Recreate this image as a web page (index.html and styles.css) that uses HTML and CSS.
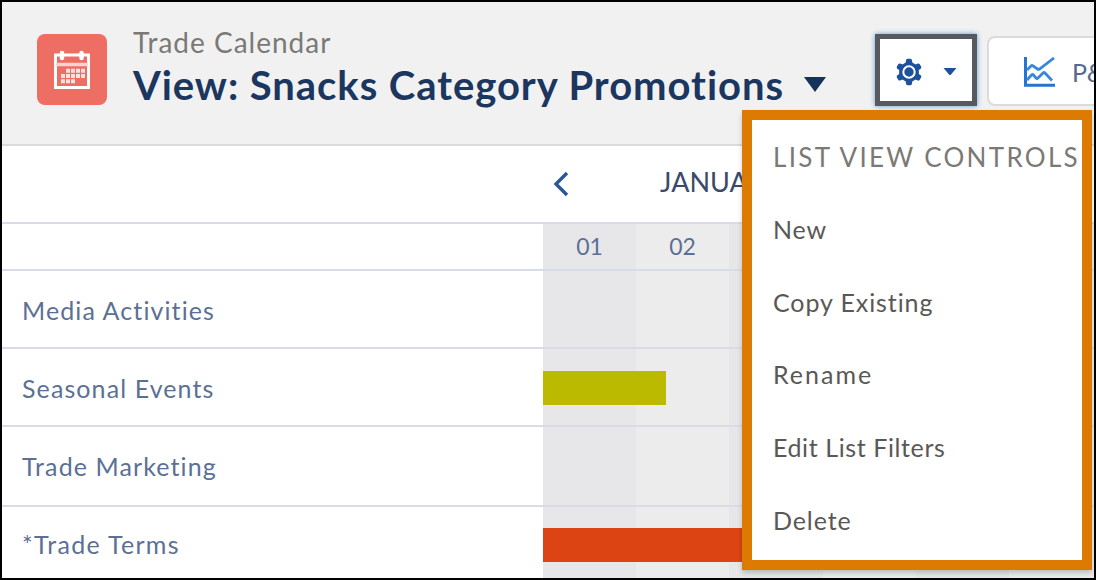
FILE: index.html
```html
<!DOCTYPE html>
<html lang="en">
<head>
    <meta charset="UTF-8">
    <meta name="viewport" content="width=device-width, initial-scale=1.0">
    <title>Trade Calendar</title>
    <link rel="stylesheet" href="styles.css">
</head>
<body>

    <div class="page">
        <header class="header">
            <div class="calendar-icon">
                <svg width="38" height="40" viewBox="0 0 38 40">
                    <path d="M2.500 5h33v32.500h-33z" fill="none" stroke="#fff" stroke-width="3"/>
                    <path d="M3 14.500h32" stroke="#fbd3d0" stroke-width="3.500"/>
                    <path d="M9 3v5M28.500 3v5" stroke="#fff" stroke-width="4.500" stroke-linecap="round"/>
                    <path d="M13 20.700h19M8 26h24M8 31.300h14" stroke="#fde3e0" stroke-width="4" stroke-dasharray="4 1"/>
                </svg>
            </div>
            <div class="heading">
                <p class="subtitle">Trade Calendar</p>
                <div class="title-line">
                    <h1 class="title">View: Snacks Category Promotions</h1>
                    <svg width="24" height="16" viewBox="0 0 24 16"><path d="M1 0h22L12 15z" fill="#16325c"/></svg>
                </div>
            </div>
            <button class="settings-button">
                <svg width="28" height="28" viewBox="0 0 28 28">
                    <g fill="#1d519b">
                        <circle cx="14" cy="14" r="10"/>
                        <path id="tooth" d="M10.500 6l.6-4q.4-1.200 1.600-1.200h2.600q1.200 0 1.600 1.200l.6 4z"/>
                        <use href="#tooth" transform="rotate(60 14 14)"/>
                        <use href="#tooth" transform="rotate(120 14 14)"/>
                        <use href="#tooth" transform="rotate(180 14 14)"/>
                        <use href="#tooth" transform="rotate(240 14 14)"/>
                        <use href="#tooth" transform="rotate(300 14 14)"/>
                    </g>
                    <circle cx="14" cy="14" r="5.700" fill="#1d519b" stroke="#fff" stroke-width="2"/>
                </svg>
                <svg width="14" height="9" viewBox="0 0 14 9"><path d="M.5 1h13L8 7.500q-1 1-2 0z" fill="#1d519b"/></svg>
            </button>
            <button class="pl-button">
                <svg width="32" height="30" viewBox="0 0 32 30" fill="none" stroke="#3a87da">
                    <path d="M1.500 0v28.300H31" stroke="#2474d0" stroke-width="3"/>
                    <path d="M3 13l4-4q1-1 2 0l4.500 3q1 .7 2 0L30 1" stroke-width="2.800"/>
                    <path d="M3 23l4.500-5q1-1 2 0l2.500 3q1 1 2 0l5-5q1-1 2 0l7 7.500" stroke-width="2.800"/>
                </svg>
                <span>P&amp;</span>
            </button>
        </header>

        <div class="month-row">
            <svg class="prev" width="18" height="26" viewBox="0 0 18 26"><path d="M15 2L4 13l11 11" fill="none" stroke="#2a5796" stroke-width="3.400"/></svg>
            <span class="month">JANUARY</span>
        </div>

        <div class="calendar">
            <div class="row days">
                <div class="label"></div>
                <div class="cells"><span>01</span><span>02</span></div>
            </div>
            <div class="row">
                <div class="label">Media Activities</div>
                <div class="cells"></div>
            </div>
            <div class="row">
                <div class="label">Seasonal Events</div>
                <div class="cells"><div class="bar seasonal"></div></div>
            </div>
            <div class="row marketing">
                <div class="label">Trade Marketing</div>
                <div class="cells"></div>
            </div>
            <div class="row">
                <div class="label terms-label">*Trade Terms</div>
                <div class="cells"><div class="bar terms"></div></div>
            </div>
        </div>
    </div>

    <!-- open settings menu -->
    <div class="menu">
        <h2>LIST VIEW CONTROLS</h2>
        <ul>
            <li>New</li>
            <li>Copy Existing</li>
            <li class="wide">Rename</li>
            <li class="narrow">Edit List Filters</li>
            <li>Delete</li>
        </ul>
    </div>

</body>
</html>
```
FILE: styles.css
```css
* {
    box-sizing: border-box;
}
body {
    margin: 0;
    font-family: Lato, "Open Sans", sans-serif;
    color: #5c7095;
    overflow: hidden;
}
h1, h2, p, ul {
    margin: 0;
    padding: 0;
}
button {
    font-family: inherit;
    padding: 0;
}
.page {
    width: 1096px;
    height: 580px;
    border: 2px solid #000;
    background: #fff;
    overflow: hidden;
}
.header {
    display: flex;
    align-items: flex-start;
    height: 144px;
    padding: 32px 0 0 35px;
    background: #f1f1f1;
    border-bottom: 2px solid #dddbda;
}
.calendar-icon {
    display: flex;
    flex: none;
    align-items: center;
    justify-content: center;
    width: 70px;
    height: 71px;
    border-radius: 8px;
    background: #ef6e64;
}
.heading {
    flex: none;
    width: 769px;
    padding: 0 0 0 26px;
    white-space: nowrap;
    margin-top: -9px;
}
.subtitle {
    font-size: 28px;
    line-height: 34px;
    color: #7b7976;
    letter-spacing: 1px;
}
.title-line {
    display: flex;
    align-items: center;
    gap: 20px;
    margin-top: 1px;
}
.title {
    width: 650px;
    font-size: 40px;
    line-height: 50px;
    font-weight: 700;
    color: #1b365f;
    letter-spacing: 0.95px;
}
.settings-button {
    display: flex;
    flex: none;
    align-items: center;
    gap: 20px;
    width: 102px;
    height: 72px;
    margin-left: -1px;
    padding: 3px 0 0 15px;
    border: 5px solid #58595f;
    background: #fff;
    box-shadow: 0 0 5px #5d9bd8;
}
.pl-button {
    display: flex;
    flex: none;
    align-items: center;
    gap: 16px;
    width: 140px;
    height: 70px;
    margin: 2px 0 0 10px;
    padding: 2px 0 0 35px;
    border: 2px solid #dddbda;
    border-radius: 8px;
    background: #fff;
    color: #54698d;
    font-size: 25px;
}
.month-row {
    display: flex;
    align-items: center;
    height: 78px;
    padding-left: 550px;
    border-bottom: 2px solid #d8dbe8;
}
.month {
    margin: -6px 0 0 90px;
    font-size: 27px;
    color: #3a4a6b;
}
/* day columns, shaded in turn */
.calendar {
    background: linear-gradient(#fff, #fff) 0 0 / 541px 100% no-repeat,
        repeating-linear-gradient(to right, #e7e7e9 0 93.2px, #ececec 93.2px 186.4px) 541px 0 / 600px 100% no-repeat;
}
.row {
    display: flex;
    height: 78px;
    border-bottom: 2px solid #d8dbe8;
}
.days {
    height: 47px;
}
.marketing {
    height: 80px;
}
.label {
    flex: none;
    width: 541px;
    padding: 23px 0 0 20px;
    font-size: 25px;
    line-height: 32px;
    letter-spacing: 1.1px;
}
.terms-label {
    padding-top: 21px;
    letter-spacing: 1.3px;
}
.cells {
    display: flex;
    align-items: center;
}
.cells span {
    width: 93px;
    margin-top: -1px;
    text-align: center;
    font-size: 23px;
}
.bar {
    height: 34px;
    margin-top: 1px;
}
.seasonal {
    width: 123px;
    background: #bbba00;
}
.terms {
    width: 400px;
    margin-top: 0;
    background: #dd4413;
}
.menu {
    position: absolute;
    left: 742px;
    top: 110px;
    width: 350px;
    height: 460px;
    padding: 21px 0 0 21px;
    border: 10px solid #dd7a01;
    background: #fff;
    box-shadow: 0 3px 5px rgba(0, 0, 0, 0.2);
    color: #5a5856;
    white-space: nowrap;
}
.menu h2 {
    font-size: 26px;
    line-height: 32px;
    font-weight: 400;
    letter-spacing: 2.3px;
    color: #7b7976;
}
.menu ul {
    list-style: none;
    padding-top: 20px;
}
.menu li {
    height: 72.7px;
    line-height: 72.7px;
    font-size: 25px;
    letter-spacing: 0.9px;
}
.menu .wide {
    letter-spacing: 2px;
}
.menu .narrow {
    letter-spacing: 0.6px;
}
```
